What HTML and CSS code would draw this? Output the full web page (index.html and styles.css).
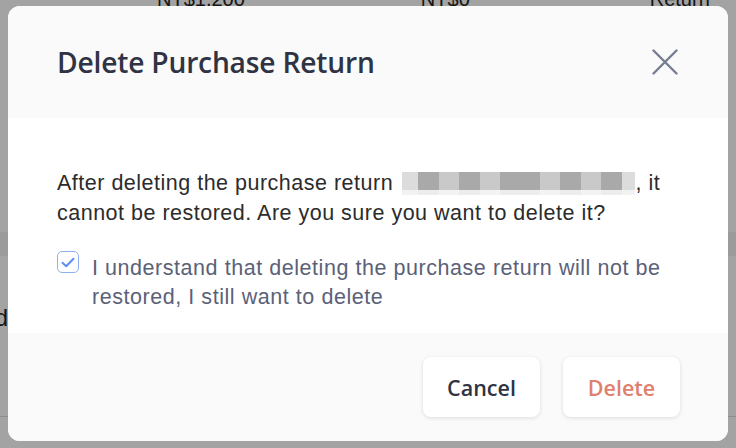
FILE: index.html
```html
<!DOCTYPE html>
<html>
<head>
<meta charset="utf-8">
<link rel="stylesheet" href="styles.css">
</head>
<body>
<div class="page">
  <div class="bg-row top">
    <span class="c1">NT$1,200</span><span class="c2">NT$0</span><span class="c3">Return</span>
  </div>
  <div class="bg-band"></div>
  <div class="bg-row mid"><span class="cut">Record</span></div>
  <div class="bg-line"></div>
</div>
<div class="overlay">
  <div class="modal">
    <div class="modal-header">
      <h2 class="title">Delete Purchase Return</h2>
      <button class="close" aria-label="Close">
        <svg width="26" height="26" viewBox="0 0 26 26"><path d="M1.5 1.5 L24.5 24.5 M24.5 1.5 L1.5 24.5" stroke="#767d92" stroke-width="2.4" stroke-linecap="round" fill="none"/></svg>
      </button>
    </div>
    <div class="modal-body">
      <p class="message">After deleting the purchase return <span class="redact"><i class="l"></i><i class="d"></i><i class="m"></i><i class="d"></i><i class="m"></i><i class="d w"></i><i class="m"></i><i class="d"></i><i class="m"></i><i class="d"></i><i class="l s"></i></span>, it cannot be restored. Are you sure you want to delete it?</p>
      <label class="confirm">
        <span class="box"><svg width="14" height="11" viewBox="0 0 14 11"><path d="M1.5 5.8 L5.2 9.2 L12.5 1.8" stroke="#5b8ff0" stroke-width="2" fill="none" stroke-linecap="round" stroke-linejoin="round"/></svg></span>
        <span class="confirm-text">I understand that deleting the purchase return will not be restored, I still want to delete</span>
      </label>
    </div>
    <div class="modal-footer">
      <button class="btn cancel">Cancel</button>
      <button class="btn delete">Delete</button>
    </div>
  </div>
</div>
</body>
</html>
```
FILE: styles.css
```css
html, body {
  margin: 0;
  padding: 0;
}
body {
  width: 736px;
  height: 448px;
  overflow: hidden;
  position: relative;
  background: #ffffff;
  font-family: "Liberation Sans", Arial, sans-serif;
}
.page {
  width: 736px;
  height: 448px;
  color: #222;
}
.bg-row {
  font-size: 20px;
  display: flex;
}
.bg-row.top {
  margin-top: -12px;
  height: 30px;
}
.bg-row.top .c1 { margin-left: 157px; }
.bg-row.top .c2 { margin-left: 176px; }
.bg-row.top .c3 { margin-left: 180px; }
.bg-band {
  margin-top: 214px;
  height: 24px;
  background: #f3f3f3;
}
.bg-row.mid {
  margin-top: 48px;
  font-size: 24px;
}
.cut {
  display: block;
  width: 90px;
  margin-left: -82px;
  text-align: right;
}
.bg-line {
  margin-top: 84px;
  height: 1px;
  background: #dddddd;
}
.overlay {
  position: absolute;
  inset: 0;
  background: rgba(0, 0, 0, 0.36);
  padding: 6px 8px 0 8px;
}
.modal {
  width: 720px;
  height: 435px;
  border-radius: 12px;
  overflow: hidden;
  background: #ffffff;
  display: flex;
  flex-direction: column;
}
.modal-header {
  height: 112px;
  background: #fafafa;
  display: flex;
  align-items: center;
  justify-content: space-between;
  padding: 0 50px 0 49px;
  box-sizing: border-box;
}
.title {
  margin: 0;
  font-family: "Open Sans", "Noto Sans", sans-serif;
  font-weight: 600;
  font-size: 28.2px;
  color: #2f3344;
  letter-spacing: -0.2px;
}
.close {
  border: 0;
  background: none;
  padding: 0;
  width: 26px;
  height: 26px;
  display: flex;
}
.modal-body {
  height: 215px;
  box-sizing: border-box;
  padding: 50px 50px 0 49px;
}
.message {
  margin: 0;
  font-size: 21.5px;
  letter-spacing: 0.5px;
  line-height: 30px;
  color: #2c2c2c;
}
.redact {
  display: inline-flex;
  vertical-align: -5px;
  height: 23px;
  margin-left: 2px;
  margin-right: 1px;
}
.redact i {
  display: block;
  width: 20px;
  height: 23px;
}
.redact i.l { background: linear-gradient(#dcdcdc 0 18px, #f2f2f2 18px); width: 16px; }
.redact i.d { background: linear-gradient(#a9a9a9 0 18px, #ededed 18px); width: 21px; }
.redact i.m { background: linear-gradient(#c9c9c9 0 18px, #f3f3f3 18px); width: 20px; }
.redact i.w { width: 40px; }
.redact i.s { width: 13px; }
.confirm {
  display: flex;
  align-items: flex-start;
  margin-top: 27px;
}
.box {
  flex: none;
  width: 20px;
  height: 20px;
  margin-top: -4px;
  border: 1.5px solid #8fb1f2;
  border-radius: 5px;
  display: flex;
  align-items: center;
  justify-content: center;
  background: #fff;
}
.confirm-text {
  margin-left: 13px;
  font-size: 21.5px;
  letter-spacing: 0.55px;
  line-height: 29px;
  color: #5b6178;
  margin-top: -1px;
}
.modal-footer {
  flex: 1;
  background: #fafafa;
  display: flex;
  justify-content: flex-end;
  align-items: flex-start;
  gap: 23px;
  padding: 24px 48px 0 0;
}
.btn {
  width: 117px;
  height: 60px;
  border: 0;
  border-radius: 8px;
  background: #ffffff;
  box-shadow: 0 1px 4px rgba(0, 0, 0, 0.12);
  font-family: "Open Sans", "Noto Sans", sans-serif;
  font-weight: 600;
  font-size: 21.5px;
}
.cancel { color: #2f3344; }
.delete { color: #e0806f; }
```
